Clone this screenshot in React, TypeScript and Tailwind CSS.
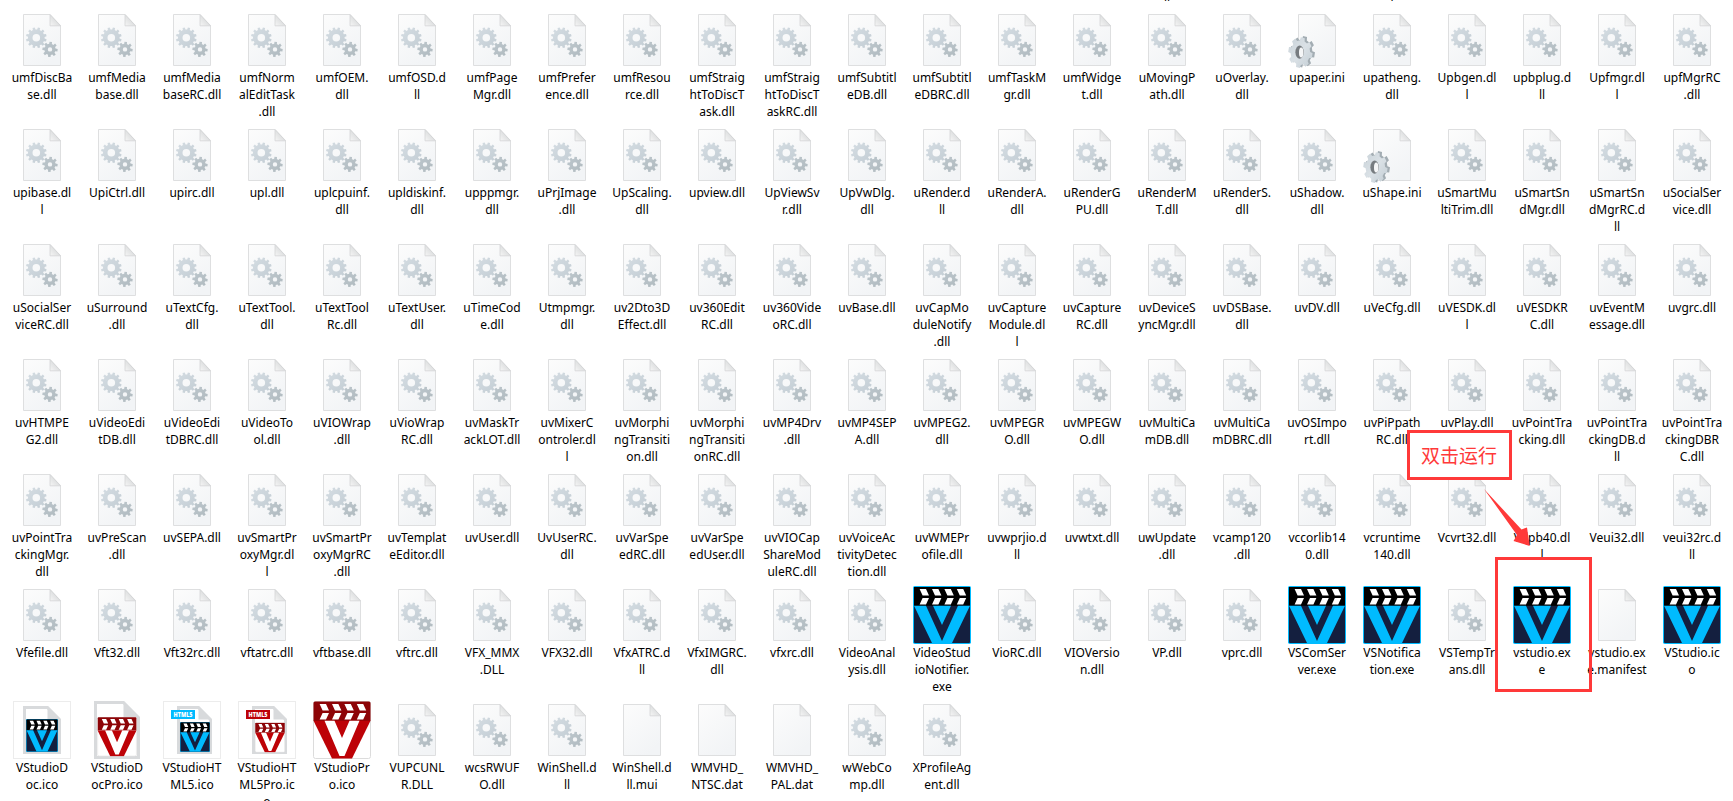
type Kind = 'dll' | 'ini' | 'blank' | 'vs' | 'doc' | 'docPro' | 'html' | 'htmlPro' | 'pro';

const ROWS: string[] = [
  'umfDiscBa|se.dll umfMedia|base.dll umfMedia|baseRC.dll umfNorm|alEditTask|.dll umfOEM.|dll umfOSD.d|ll umfPage|Mgr.dll umfPrefer|ence.dll umfResou|rce.dll umfStraig|htToDiscT|ask.dll umfStraig|htToDiscT|askRC.dll umfSubtitl|eDB.dll umfSubtitl|eDBRC.dll umfTaskM|gr.dll umfWidge|t.dll uMovingP|ath.dll uOverlay.|dll upaper.ini upatheng.|dll Upbgen.dl|l upbplug.d|ll Upfmgr.dl|l upfMgrRC|.dll',
  'upibase.dl|l UpiCtrl.dll upirc.dll upl.dll uplcpuinf.|dll upldiskinf.|dll upppmgr.|dll uPrjImage|.dll UpScaling.|dll upview.dll UpViewSv|r.dll UpVwDlg.|dll uRender.d|ll uRenderA.|dll uRenderG|PU.dll uRenderM|T.dll uRenderS.|dll uShadow.|dll uShape.ini uSmartMu|ltiTrim.dll uSmartSn|dMgr.dll uSmartSn|dMgrRC.d|ll uSocialSer|vice.dll',
  'uSocialSer|viceRC.dll uSurround|.dll uTextCfg.|dll uTextTool.|dll uTextTool|Rc.dll uTextUser.|dll uTimeCod|e.dll Utmpmgr.|dll uv2Dto3D|Effect.dll uv360Edit|RC.dll uv360Vide|oRC.dll uvBase.dll uvCapMo|duleNotify|.dll uvCapture|Module.dl|l uvCapture|RC.dll uvDeviceS|yncMgr.dll uvDSBase.|dll uvDV.dll uVeCfg.dll uVESDK.dl|l uVESDKR|C.dll uvEventM|essage.dll uvgrc.dll',
  'uvHTMPE|G2.dll uVideoEdi|tDB.dll uVideoEdi|tDBRC.dll uVideoTo|ol.dll uVIOWrap|.dll uVioWrap|RC.dll uvMaskTr|ackLOT.dll uvMixerC|ontroler.dl|l uvMorphi|ngTransiti|on.dll uvMorphi|ngTransiti|onRC.dll uvMP4Drv|.dll uvMP4SEP|A.dll uvMPEG2.|dll uvMPEGR|O.dll uvMPEGW|O.dll uvMultiCa|mDB.dll uvMultiCa|mDBRC.dll uvOSImpo|rt.dll uvPiPpath|RC.dll uvPlay.dll uvPointTra|cking.dll uvPointTra|ckingDB.d|ll uvPointTra|ckingDBR|C.dll',
  'uvPointTra|ckingMgr.|dll uvPreScan|.dll uvSEPA.dll uvSmartPr|oxyMgr.dl|l uvSmartPr|oxyMgrRC|.dll uvTemplat|eEditor.dll uvUser.dll UvUserRC.|dll uvVarSpe|edRC.dll uvVarSpe|edUser.dll uvVIOCap|ShareMod|uleRC.dll uvVoiceAc|tivityDetec|tion.dll uvWMEPr|ofile.dll uvwprjio.d|ll uvwtxt.dll uwUpdate|.dll vcamp120|.dll vccorlib14|0.dll vcruntime|140.dll Vcvrt32.dll Vdpb40.dl|l Veui32.dll veui32rc.d|ll',
  'Vfefile.dll Vft32.dll Vft32rc.dll vftatrc.dll vftbase.dll vftrc.dll VFX_MMX|.DLL VFX32.dll VfxATRC.d|ll VfxIMGRC.|dll vfxrc.dll VideoAnal|ysis.dll VideoStud|ioNotifier.|exe VioRC.dll VIOVersio|n.dll VP.dll vprc.dll VSComSer|ver.exe VSNotifica|tion.exe VSTempTr|ans.dll vstudio.ex|e vstudio.ex|e.manifest VStudio.ic|o',
  'VStudioD|oc.ico VStudioD|ocPro.ico VStudioHT|ML5.ico VStudioHT|ML5Pro.ic|o VStudioPr|o.ico VUPCUNL|R.DLL wcsRWUF|O.dll WinShell.d|ll WinShell.d|ll.mui WMVHD_|NTSC.dat WMVHD_|PAL.dat wWebCo|mp.dll XProfileAg|ent.dll',
];

const SPECIAL: Record<string, Kind> = {
  'VStudioDoc.ico': 'doc',
  'VStudioDocPro.ico': 'docPro',
  'VStudioHTML5.ico': 'html',
  'VStudioHTML5Pro.ico': 'htmlPro',
  'VStudioPro.ico': 'pro',
  'VStudio.ico': 'vs',
};

function kindOf(name: string): Kind {
  if (SPECIAL[name]) return SPECIAL[name];
  if (name.endsWith('.exe')) return 'vs';
  if (name.endsWith('.ini')) return 'ini';
  if (/\.(mui|dat|manifest)$/.test(name)) return 'blank';
  return 'dll';
}

function gear(cx: number, cy: number, rx: number, ry: number, teeth: number, depth: number, turn = 0) {
  const pts: string[] = [];
  const step = (Math.PI * 2) / teeth;
  const at = (angle: number, k: number) =>
    pts.push(`${(cx + Math.cos(angle) * rx * k).toFixed(2)} ${(cy + Math.sin(angle) * ry * k).toFixed(2)}`);
  for (let i = 0; i < teeth; i++) {
    const a = i * step + turn;
    at(a - step * 0.31, depth);
    at(a - step * 0.21, 1);
    at(a + step * 0.21, 1);
    at(a + step * 0.31, depth);
  }
  return `M${pts.join('L')}Z`;
}

function hole(cx: number, cy: number, r: number) {
  return `M${cx - r} ${cy}a${r} ${r} 0 1 0 ${2 * r} 0a${r} ${r} 0 1 0 ${-2 * r} 0Z`;
}

const BIG = gear(23.3, 26.7, 10.4, 10.4, 12, 0.8, -0.26) + hole(23.3, 26.7, 3.8);
const SMALL = gear(37, 38.4, 7.7, 7.7, 8, 0.73, 0.1) + hole(37, 38.4, 2.2);
const INI_BACK = gear(14.6, 40.8, 12.4, 15.8, 8, 0.79, 0.2);
const INI_FRONT = gear(12.4, 41.6, 12.2, 15.4, 8, 0.8, 0.2);

function Page() {
  return (
    <>
      <path d="M10.5 3.5H37L47.5 14.5V54.5H10.5Z" fill="url(#paper)" stroke="#dedfe0" />
      <path d="M37 3.5V14.8H47.5Z" fill="url(#fold)" stroke="#d3d4d5" strokeWidth="0.8" />
    </>
  );
}

function Stripes({ fill }: { fill: string }) {
  return (
    <g fill={fill}>
      {[0, 1, 2, 3].map((i) => (
        <path key={i} d={`M${6.6 + i * 12.4} 3h6.4l3 6.6h-6.4zM${9.6 + i * 12.4} 12h6.4l-3 6.6h-6.4z`} />
      ))}
    </g>
  );
}

function BlueBadge() {
  return (
    <>
      <rect width="58" height="58" rx="1.8" fill="#00bbff" />
      <rect x="1" y="1" width="56" height="56" rx="1" fill="#141f3f" />
      <rect x="1" y="1" width="56" height="18.8" fill="#000" />
      <Stripes fill="#fff" />
      <path d="M1 19.8H13L29 55L45 19.8H57L39 57H19ZM20 19.8H38L29 39Z" fill="#00bbff" />
    </>
  );
}

function RedBadge() {
  return (
    <>
      <rect x="0.5" y="0.5" width="57" height="57" rx="2" fill="#fff" stroke="#dcdcdc" />
      <path d="M0.5 2Q0.5 0.5 2 0.5H56Q57.5 0.5 57.5 2V20H0.5Z" fill="#8d0407" />
      <Stripes fill="#fff" />
      <path d="M0.5 19.8H57.5L39 57.5H19Z" fill="#bd0207" />
      <path d="M11.5 19.8H21.5L29 37L36.5 19.8H46.5L31.5 55H26.5Z" fill="#fff" />
    </>
  );
}

function DocShape({ x, y, w, h, fold }: { x: number; y: number; w: number; h: number; fold: number }) {
  return (
    <>
      <path d={`M${x} ${y}H${x + w - fold}L${x + w} ${y + fold}V${y + h}H${x}Z`} fill="#fff" stroke="#d8dadc" strokeWidth="3" />
      <path d={`M${x + w - fold} ${y}V${y + fold}H${x + w}Z`} fill="#d8dadc" />
    </>
  );
}

function Frame() {
  return <rect x="0.5" y="0.5" width="57" height="57" fill="#fff" stroke="#ececec" />;
}

function HtmlTag({ color }: { color: string }) {
  return (
    <>
      <rect x="8" y="9" width="24" height="9" fill={color} />
      <text x="20" y="16.2" textAnchor="middle" textLength="19" lengthAdjust="spacingAndGlyphs" className="font-['Open_Sans',sans-serif] text-[7px] font-extrabold" fill="#fff">HTML5</text>
    </>
  );
}

function Icon({ kind }: { kind: Kind }) {
  return (
    <svg viewBox="0 0 58 58" className="ml-2 block h-[58px] w-[58px] shrink-0 overflow-visible">
      {(kind === 'dll' || kind === 'blank' || kind === 'ini') && <Page />}
      {kind === 'dll' && (
        <>
          <path d={BIG} fill="url(#gearBig)" fillRule="evenodd" />
          <path d={SMALL} fill="url(#gearSmall)" fillRule="evenodd" />
        </>
      )}
      {kind === 'ini' && (
        <>
          <path d={INI_BACK} fill="#a3adb3" />
          <path d={INI_FRONT} fill="url(#gearIni)" />
          <ellipse cx="11.6" cy="41.2" rx="4.2" ry="6.6" fill="#777c80" />
          <ellipse cx="13.2" cy="41.6" rx="2.2" ry="5" fill="#f5f6f7" />
        </>
      )}
      {kind === 'vs' && <BlueBadge />}
      {kind === 'pro' && <RedBadge />}
      {kind === 'doc' && (
        <>
          <Frame />
          <DocShape x={11.5} y={6.5} w={35} h={45} fold={12} />
          <svg x="13" y="18" width="32" height="33" viewBox="0 0 58 58" preserveAspectRatio="none"><BlueBadge /></svg>
        </>
      )}
      {kind === 'docPro' && (
        <>
          <DocShape x={7.5} y={1.5} w={43} h={55} fold={15} />
          <svg x="9.3" y="16" width="39.5" height="39.5" viewBox="0 0 58 58"><RedBadge /></svg>
        </>
      )}
      {kind === 'html' && (
        <>
          <Frame />
          <DocShape x={15.5} y={6.5} w={32} h={45} fold={12} />
          <HtmlTag color="#00bbff" />
          <svg x="17" y="21" width="30" height="30" viewBox="0 0 58 58"><BlueBadge /></svg>
        </>
      )}
      {kind === 'htmlPro' && (
        <>
          <Frame />
          <DocShape x={15.5} y={6.5} w={32} h={45} fold={12} />
          <HtmlTag color="#bd0207" />
          <svg x="17" y="21.5" width="30" height="30" viewBox="0 0 58 58"><RedBadge /></svg>
        </>
      )}
    </svg>
  );
}

function Defs() {
  return (
    <svg className="absolute h-0 w-0">
      <defs>
        <linearGradient id="paper" x1="0" y1="0" x2="0.6" y2="1">
          <stop offset="0" stopColor="#fcfcfc" />
          <stop offset="1" stopColor="#f2f4f6" />
        </linearGradient>
        <linearGradient id="fold" x1="0" y1="1" x2="0.7" y2="0.3">
          <stop offset="0" stopColor="#f6f6f6" />
          <stop offset="1" stopColor="#d6d8d9" />
        </linearGradient>
        <linearGradient id="gearBig" x1="0" y1="0" x2="1" y2="1">
          <stop offset="0" stopColor="#d5dde3" />
          <stop offset="1" stopColor="#c3cdd4" />
        </linearGradient>
        <linearGradient id="gearSmall" x1="0" y1="0" x2="1" y2="1">
          <stop offset="0" stopColor="#bdc7cd" />
          <stop offset="1" stopColor="#b0babf" />
        </linearGradient>
        <linearGradient id="gearIni" x1="0" y1="0" x2="1" y2="1">
          <stop offset="0" stopColor="#c9d2d8" />
          <stop offset="0.5" stopColor="#dae1e6" />
          <stop offset="1" stopColor="#c3cdd4" />
        </linearGradient>
      </defs>
    </svg>
  );
}

function File({ label }: { label: string }) {
  return (
    <div className="flex h-[115px] w-[75px] flex-col">
      <Icon kind={kindOf(label.replaceAll('|', ''))} />
      <div className="pr-px text-center">
        {label.split('|').map((line, i) => (
          <div key={i} className="h-[17px] whitespace-nowrap">{line}</div>
        ))}
      </div>
    </div>
  );
}

function Annotation() {
  return (
    <>
      <div className="absolute left-[1407px] top-[430px] flex h-[50px] w-[105px] items-center justify-center border-3 border-[#ff3939] bg-white pr-px pb-px font-['Noto_Sans_CJK_SC',sans-serif] text-[19px] text-[#ff3939]">
        双击运行
      </div>
      <svg className="absolute left-[1484px] top-[489px] h-[58px] w-[48px]" viewBox="0 0 48 58">
        <path d="M0 0L37.5 40.5L43 38.5L45.7 57L29.5 52L33 46Z" fill="#ff3939" />
      </svg>
      <div className="absolute left-[1495px] top-[557px] h-[135px] w-[97px] border-3 border-[#ff3939]" />
    </>
  );
}

export default function App() {
  return (
    <div className="relative h-[801px] w-[1733px] overflow-hidden bg-white pl-[5px] font-['Noto_Sans',sans-serif] text-[12px] leading-[17px] text-black">
      <Defs />
      <div className="grid h-[11px] grid-cols-[repeat(23,75px)] overflow-hidden text-center">
        <div className="col-start-16 -mt-3 pr-px">ll</div>
        <div className="col-start-19 -mt-3 pr-px">l</div>
      </div>
      {ROWS.map((row, r) => (
        <div key={r} className="flex">
          {row.split(' ').map((label) => <File key={label} label={label} />)}
        </div>
      ))}
      <Annotation />
    </div>
  );
}
